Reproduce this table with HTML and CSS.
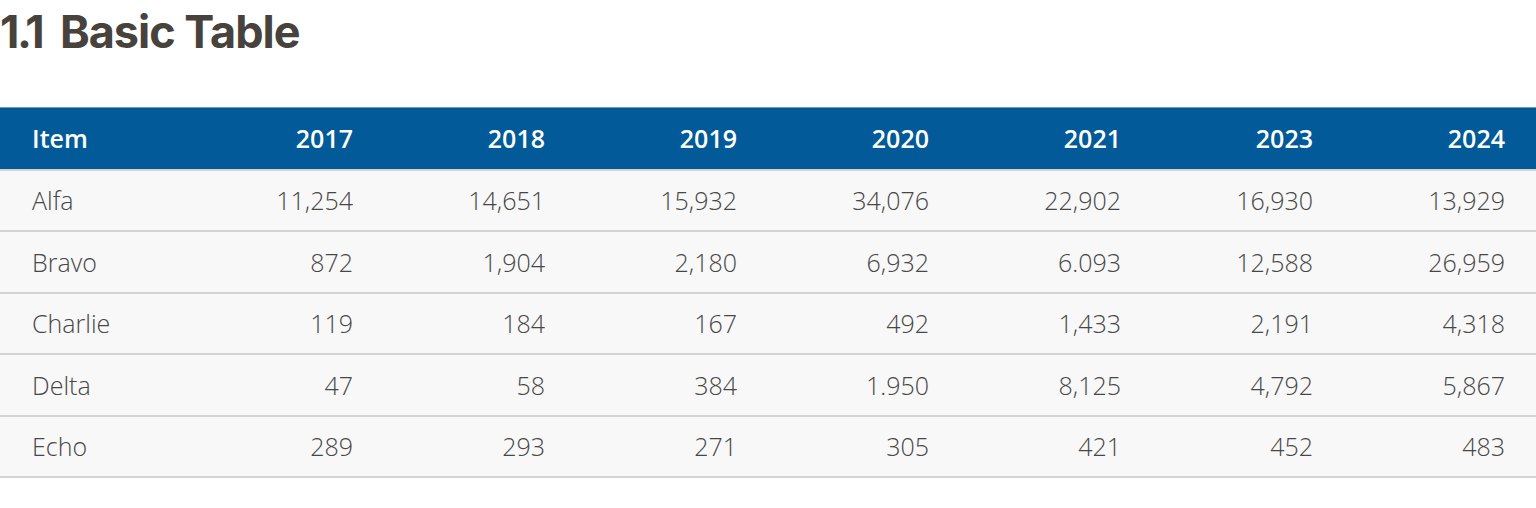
FILE: index.html
```html
<!DOCTYPE html>
<html lang="en">
<head>
<meta charset="utf-8">
<title>1.1 Basic Table</title>
<link rel="stylesheet" href="styles.css">
</head>
<body>
<h1 class="title"><span class="title-num">1.1</span> Basic Table</h1>
<table class="data-table">
  <thead>
    <tr><th class="item">Item</th><th>2017</th><th>2018</th><th>2019</th><th>2020</th><th>2021</th><th>2023</th><th>2024</th></tr>
  </thead>
  <tbody>
    <tr><td class="item">Alfa</td><td>11,254</td><td>14,651</td><td>15,932</td><td>34,076</td><td>22,902</td><td>16,930</td><td>13,929</td></tr>
    <tr><td class="item">Bravo</td><td>872</td><td>1,904</td><td>2,180</td><td>6,932</td><td>6.093</td><td>12,588</td><td>26,959</td></tr>
    <tr><td class="item">Charlie</td><td>119</td><td>184</td><td>167</td><td>492</td><td>1,433</td><td>2,191</td><td>4,318</td></tr>
    <tr><td class="item">Delta</td><td>47</td><td>58</td><td>384</td><td>1.950</td><td>8,125</td><td>4,792</td><td>5,867</td></tr>
    <tr><td class="item">Echo</td><td>289</td><td>293</td><td>271</td><td>305</td><td>421</td><td>452</td><td>483</td></tr>
  </tbody>
</table>
</body>
</html>
```

FILE: styles.css
```css
html, body {
  margin: 0;
  padding: 0;
  background: #ffffff;
}

body {
  font-family: "Open Sans", Lato, sans-serif;
}

.title {
  margin: 0 0 47px 0;
  padding-top: 4px;
  font-family: Inter, "Liberation Sans", sans-serif;
  font-weight: 700;
  font-size: 45px;
  line-height: 56px;
  letter-spacing: -1px;
  color: #47423c;
}

.title-num {
  letter-spacing: -2.5px;
  margin-right: 8px;
}

.data-table {
  width: 1536px;
  border-collapse: collapse;
  table-layout: fixed;
}

.data-table th,
.data-table td {
  box-sizing: border-box;
  width: 192px;
  padding: 0 31px 0 32px;
  text-align: right;
  vertical-align: middle;
  font-size: 25px;
  white-space: nowrap;
}

.data-table th {
  height: 62px;
  background: #025b98;
  color: #ffffff;
  font-weight: 600;
  border-top: 1px solid #6f97b8;
  border-bottom: 2px solid #d3d3d3;
}

.data-table td {
  height: 61.5px;
  background: #f8f8f8;
  color: #474747;
  font-weight: 300;
  border-bottom: 2px solid #d3d3d3;
}

.data-table .item {
  text-align: left;
}
```
